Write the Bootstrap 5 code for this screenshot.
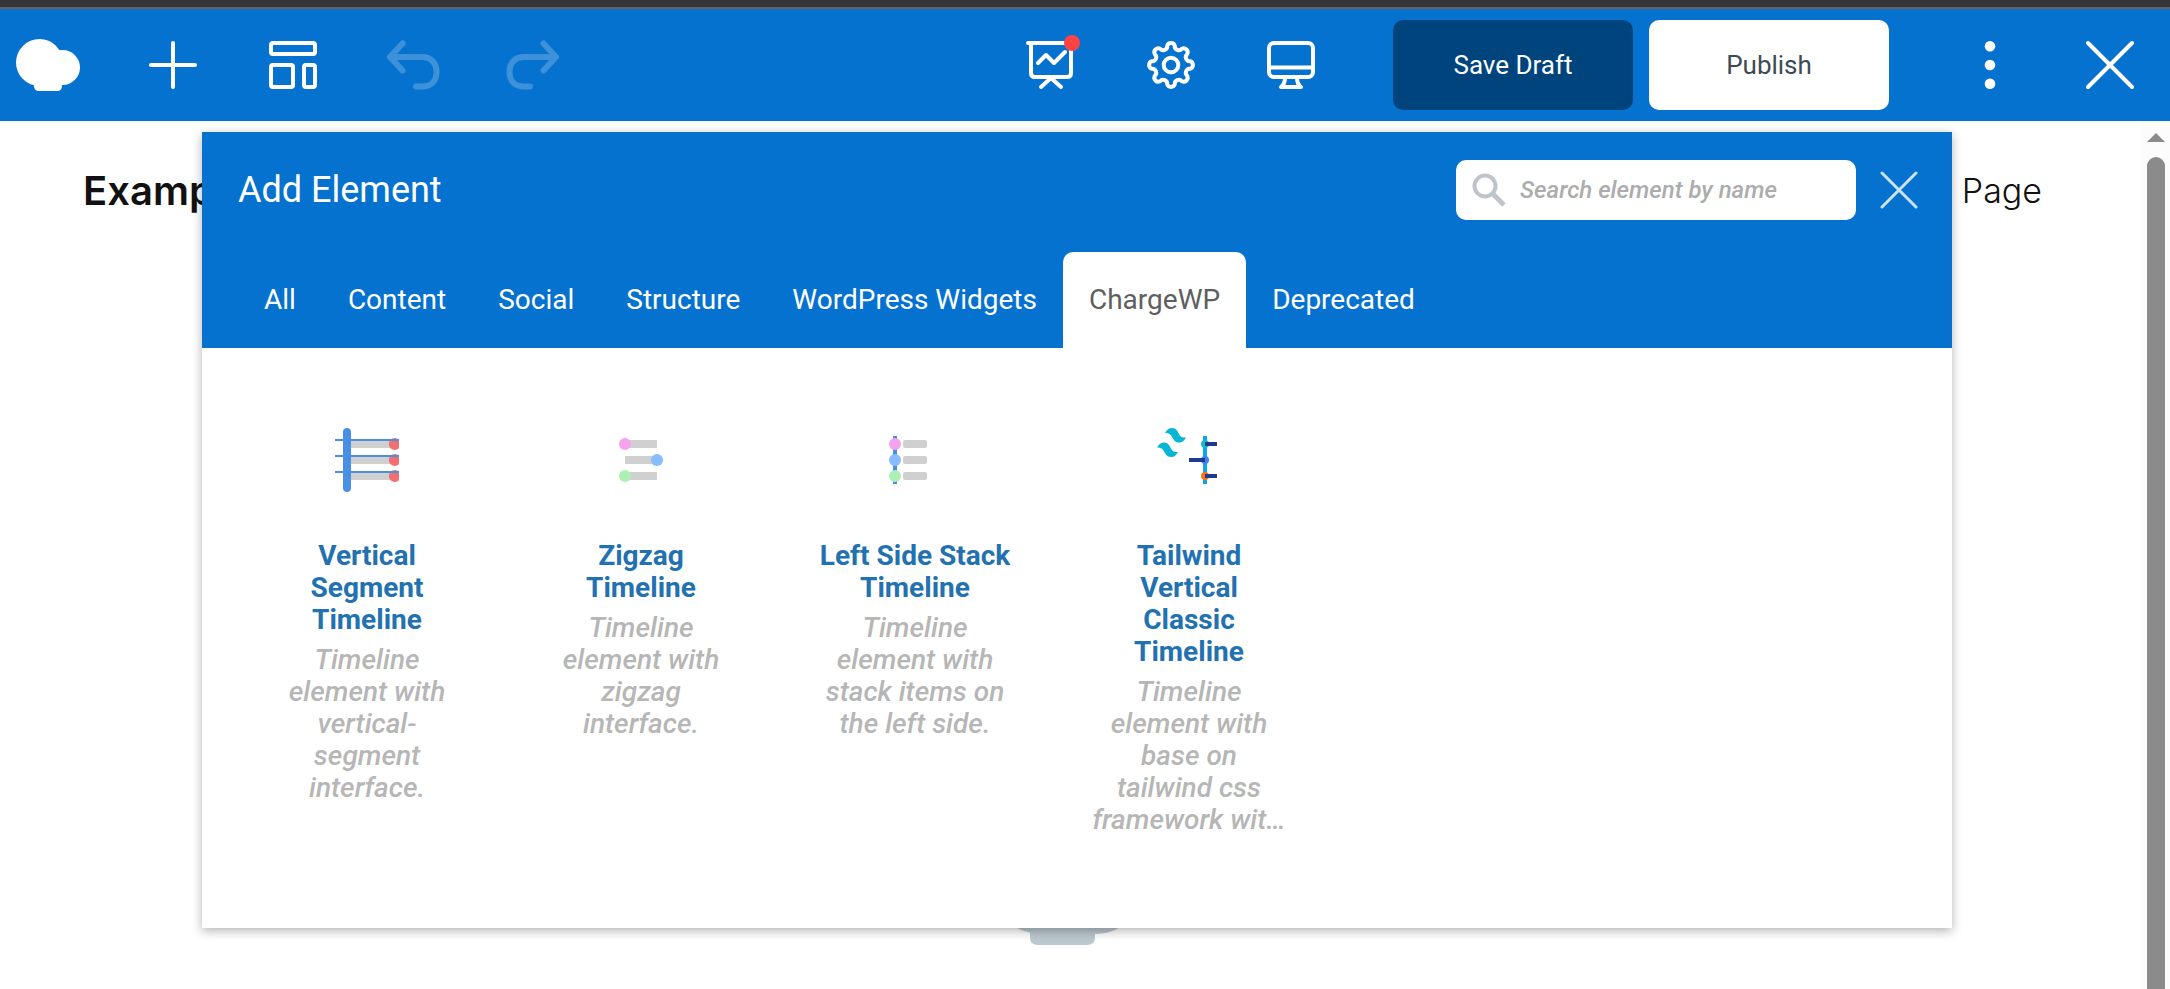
<!DOCTYPE html>
<html lang="en">
<head>
<meta charset="utf-8">
<meta name="viewport" content="width=device-width, initial-scale=1">
<title>Add Element</title>
<link href="https://cdn.jsdelivr.net/npm/bootstrap@5.3.0/dist/css/bootstrap.min.css" rel="stylesheet">
<style>
:root { --vc-blue: #0672cf; }
body { font-family: Roboto, "Liberation Sans", sans-serif; }
.top-strip { height: 9px; background: #353535; border-bottom: 2px solid #646464; }
.main-bar { background: var(--vc-blue); height: 112px; }
.main-bar svg, .panel-box svg { display: block; overflow: visible; }
.brand-link { width: 113px; padding-left: 16px; }
.bar-btn { width: 120px; height: 112px; color: #fff; }
.bar-btn:disabled { opacity: 1; color: #fff; border: 0; }
.bar-btn:disabled svg { opacity: .22; stroke-width: 6; }
.stroke-icon { fill: none; stroke: currentColor; stroke-width: 4; stroke-linecap: round; stroke-linejoin: round; }
.action-btn { width: 240px; height: 90px; border-radius: 10px; font-size: 26px; border: 0; }
.btn-draft, .btn-draft:hover { background: #00447e; color: #fff; }
.btn-live, .btn-live:hover { background: #fff; color: #3d4a54; }
.actions { margin: 0 41px 0 42px; }
.site-head { padding: 40px 99px 0 83px; color: #111; font-family: Inter, "Liberation Sans", sans-serif; }
.site-name { font-size: 40px; line-height: 60px; font-weight: 600; }
.site-link { font-size: 34px; line-height: 60px; font-weight: 300; color: #111; }
.page-mark { margin-top: 601px; margin-right: 16px; }
.panel-box { top: 11px; left: 202px; right: 218px; background: #fff; box-shadow: 0 3px 10px rgba(0,0,0,.3); }
.panel-head { background: var(--vc-blue); padding: 28px 34px 0 36px; }
.panel-title { font-size: 36px; line-height: 60px; font-weight: 400; }
.search-box { width: 400px; height: 60px; border-radius: 10px; padding: 0 16px; }
.search-box input { font-size: 24px; font-style: italic; font-weight: 500; padding: 0 0 0 14px; }
.search-box input:focus { box-shadow: none; }
.search-box input::placeholder { color: #acacac; opacity: 1; }
.close-btn { margin-left: 24px; color: #fff; opacity: .8; }
.tab-row { margin: 32px 0 0 -10px; padding-left: 10px; }
.tab-row .nav-link { color: #fff; font-size: 28px; line-height: 96px; padding: 0 26px; border: 0; border-radius: 10px 10px 0 0; margin: 0; }
.tab-row .nav-link.active { background: #fff; color: #5f5f5f; }
.element-list { padding: 80px 28px 92px; }
.element-item { width: 274px; padding: 0 40px; font-size: 28px; line-height: 32px; }
.element-name { color: #2271b1; font-weight: 700; margin-top: 48px; }
.element-text { color: #b6b6b6; font-style: italic; font-weight: 500; margin-top: 8px; }
.scroll-rail { width: 29px; background: #fcfcfc; padding: 12px 5px 0 6px; }
.scroll-thumb { background: #8b8b8b; border-radius: 9px 9px 0 0; margin-top: 15px; }
</style>
</head>
<body class="vh-100 overflow-hidden d-flex flex-column bg-white">
<div class="top-strip flex-shrink-0"></div>
<header class="main-bar d-flex align-items-center flex-shrink-0">
  <a href="#" class="brand-link" aria-label="Home">
    <svg width="64" height="52" viewBox="0 0 64 52" fill="#fff"><circle cx="23.5" cy="23.5" r="23.5"/><circle cx="46.5" cy="28.5" r="17.5"/><path d="M18 38h28v9q0 5-5 5H23q-5 0-5-5z"/></svg>
  </a>
  <button class="bar-btn btn p-0 border-0 d-flex align-items-center justify-content-center" aria-label="Add element">
    <svg class="stroke-icon" width="48" height="48"><path d="M24 2v44M2 24h44"/></svg>
  </button>
  <button class="bar-btn btn p-0 border-0 d-flex align-items-center justify-content-center" aria-label="Templates">
    <svg class="stroke-icon" width="48" height="48"><rect x="2" y="2" width="44" height="11" rx="2"/><rect x="2" y="24" width="22" height="22" rx="2"/><rect x="35" y="24" width="11" height="22" rx="2"/></svg>
  </button>
  <button class="bar-btn btn p-0 d-flex align-items-center justify-content-center" aria-label="Undo" disabled>
    <svg class="stroke-icon" width="52" height="48"><path d="M15.500 2.500 3 16l12.500 13.500M3 16h32c9 0 14.500 6 14.500 15S44 45.500 35 45.500h-6"/></svg>
  </button>
  <button class="bar-btn btn p-0 d-flex align-items-center justify-content-center" aria-label="Redo" disabled>
    <svg class="stroke-icon" width="52" height="48"><path d="M36.500 2.500 49 16 36.500 29.500M49 16H17C8 16 2.500 22 2.500 31S8 45.500 17 45.500h6"/></svg>
  </button>
  <button class="bar-btn btn p-0 border-0 d-flex align-items-center justify-content-center ms-auto" aria-label="Insights">
    <svg class="stroke-icon" width="48" height="48"><path d="M1 2h46M4 2v30q0 4 4 4h32q4 0 4-4V2M24 37l-10 9M24 37l10 9M11 22l8-8 8 8 11-11"/><circle cx="45" cy="2" r="8" fill="#ff4343" stroke="none"/></svg>
  </button>
  <button class="bar-btn btn p-0 border-0 d-flex align-items-center justify-content-center" aria-label="Settings">
    <svg class="stroke-icon" width="48" height="48"><circle cx="24" cy="24" r="7.300"/><path d="M43.130 20.200A4 4 0 0 1 43.130 27.800A4 4 0 0 0 40.210 34.830A4 4 0 0 1 34.830 40.210A4 4 0 0 0 27.800 43.130A4 4 0 0 1 20.200 43.130A4 4 0 0 0 13.170 40.210A4 4 0 0 1 7.790 34.830A4 4 0 0 0 4.870 27.800A4 4 0 0 1 4.870 20.200A4 4 0 0 0 7.790 13.170A4 4 0 0 1 13.170 7.790A4 4 0 0 0 20.200 4.870A4 4 0 0 1 27.800 4.870A4 4 0 0 0 34.830 7.790A4 4 0 0 1 40.210 13.170A4 4 0 0 0 43.130 20.200z"/></svg>
  </button>
  <button class="bar-btn btn p-0 border-0 d-flex align-items-center justify-content-center" aria-label="Device">
    <svg class="stroke-icon" width="48" height="48"><rect x="2" y="2" width="44" height="34" rx="5"/><path d="M2 26.500h44M18 37q0 6-4 9h20q-4-3-4-9"/></svg>
  </button>
  <div class="actions d-flex gap-3">
    <button class="btn action-btn btn-draft">Save Draft</button>
    <button class="btn action-btn btn-live">Publish</button>
  </div>
  <button class="bar-btn btn p-0 border-0 d-flex align-items-center justify-content-center" aria-label="More">
    <svg width="12" height="48" fill="#fff"><circle cx="6" cy="5.300" r="5.300"/><circle cx="6" cy="24" r="5.300"/><circle cx="6" cy="42.700" r="5.300"/></svg>
  </button>
  <button class="bar-btn btn p-0 border-0 d-flex align-items-center justify-content-center" aria-label="Close editor">
    <svg class="stroke-icon" width="48" height="48"><path d="M2 2l44 44M46 2 2 46"/></svg>
  </button>
</header>

<div class="d-flex flex-grow-1 position-relative overflow-hidden">
  <main class="flex-grow-1">
    <div class="site-head d-flex justify-content-between align-items-center">
      <div class="site-name">Example</div>
      <a href="#" class="site-link text-decoration-none">Sample Page</a>
    </div>
    <div class="page-mark d-flex justify-content-center">
      <svg width="154" height="123" viewBox="986 822 154 123" fill="#bbc8ce"><circle cx="1042" cy="878" r="56"/><circle cx="1097" cy="891" r="43"/><path d="M1030 915h65v22q0 8-8 8h-49q-8 0-8-8z"/></svg>
    </div>
  </main>
  <div class="scroll-rail d-flex flex-column">
    <svg width="18" height="9" class="flex-shrink-0"><path d="M9 0l9 9H0z" fill="#8b8b8b"/></svg>
    <div class="scroll-thumb flex-grow-1"></div>
  </div>

  <section class="panel-box position-absolute" aria-label="Add Element">
    <div class="panel-head">
      <div class="d-flex align-items-center">
        <h1 class="panel-title text-white m-0 me-auto">Add Element</h1>
        <label class="search-box bg-white d-flex align-items-center">
          <svg width="34" height="34" fill="none" stroke="#bfc4cc" class="flex-shrink-0"><circle cx="13" cy="13" r="10.500" stroke-width="4"/><path d="M20.500 20.500 32 32" stroke-width="5"/></svg>
          <input type="text" class="form-control border-0 bg-transparent" placeholder="Search element by name" aria-label="Search element by name">
        </label>
        <button class="btn close-btn p-0 border-0" aria-label="Close">
          <svg class="stroke-icon" width="38" height="38"><path stroke-width="3" d="M2 2l34 34M36 2 2 36"/></svg>
        </button>
      </div>
      <ul class="nav nav-tabs tab-row border-0">
        <li class="nav-item"><button class="nav-link">All</button></li>
        <li class="nav-item"><button class="nav-link">Content</button></li>
        <li class="nav-item"><button class="nav-link">Social</button></li>
        <li class="nav-item"><button class="nav-link">Structure</button></li>
        <li class="nav-item"><button class="nav-link">WordPress Widgets</button></li>
        <li class="nav-item"><button class="nav-link active">ChargeWP</button></li>
        <li class="nav-item"><button class="nav-link">Deprecated</button></li>
      </ul>
    </div>
    <div class="element-list d-flex flex-wrap text-center">
      <div class="element-item">
        <svg class="mx-auto" width="64" height="64"><g fill="#d0d0d0"><path d="M16 12h40v8H16zM16 28h40v8H16zM16 44h40v8H16z"/></g><path fill="#f37070" d="M64 11.700a6 6 0 1 0 0 8.600zM64 27.700a6 6 0 1 0 0 8.600zM64 43.700a6 6 0 1 0 0 8.600z"/><path fill="#4a90e2" d="M0 11h64v2H0zM0 27h64v2H0zM0 43h64v2H0z"/><rect x="8" width="8" height="64" rx="4" fill="#4a90e2"/></svg>
        <div class="element-name">Vertical Segment Timeline</div>
        <div class="element-text">Timeline element with vertical-segment interface.</div>
      </div>
      <div class="element-item">
        <svg class="mx-auto" width="64" height="64"><path fill="#d0d0d0" d="M16 12h32v8H16zM16 28h32v8H16zM16 44h32v8H16z"/><circle cx="16" cy="16" r="6" fill="#f5a3ec"/><circle cx="48" cy="32" r="6" fill="#88bbff"/><circle cx="16" cy="48" r="6" fill="#aef0b4"/></svg>
        <div class="element-name">Zigzag Timeline</div>
        <div class="element-text">Timeline element with zigzag interface.</div>
      </div>
      <div class="element-item">
        <svg class="mx-auto" width="64" height="64"><path fill="#4a90e2" d="M10 8h4v48h-4z"/><circle cx="12" cy="16" r="6" fill="#f5a3ec"/><circle cx="12" cy="32" r="6" fill="#88bbff"/><circle cx="12" cy="48" r="6" fill="#aef0b4"/><g fill="#d0d0d0"><rect x="20" y="12" width="24" height="8" rx="2"/><rect x="20" y="28" width="24" height="8" rx="2"/><rect x="20" y="44" width="24" height="8" rx="2"/></g></svg>
        <div class="element-name">Left Side Stack Timeline</div>
        <div class="element-text">Timeline element with stack items on the left side.</div>
      </div>
      <div class="element-item">
        <svg class="mx-auto" width="64" height="64"><g fill="#06b6d4"><path d="M8 5c2-3.500 4-5 7-5c4 0 5.500 3 7 6c1.500 3 3.500 3.500 7 3.500c-2 3.500-3.500 5-7 5c-4 0-5.500-3-7-5.500c-1.500-3-3-4-7-4z"/><path d="M0 19.500c2-3.500 4-5 7-5c4 0 5.500 3 7 6c1.500 3 3.500 3.500 7 3.500c-2 3.500-3.500 5-7 5c-4 0-5.500-3-7-5.500c-1.500-3-3-4-7-4z"/></g><path fill="#0ea5e9" d="M46 8h4v48h-4z"/><circle cx="48" cy="16" r="4" fill="#14b8c6"/><circle cx="48" cy="32" r="4" fill="#3b82f6"/><circle cx="48" cy="48" r="4" fill="#f97316"/><path fill="#1e3a8a" d="M48 14h12v4H48zM32 30h16v4H32zM48 46h12v4H48z"/></svg>
        <div class="element-name">Tailwind Vertical Classic Timeline</div>
        <div class="element-text">Timeline element with base on tailwind css framework wit…</div>
      </div>
    </div>
  </section>
</div>
<script src="https://cdn.jsdelivr.net/npm/bootstrap@5.3.0/dist/js/bootstrap.bundle.min.js"></script>
</body>
</html>
